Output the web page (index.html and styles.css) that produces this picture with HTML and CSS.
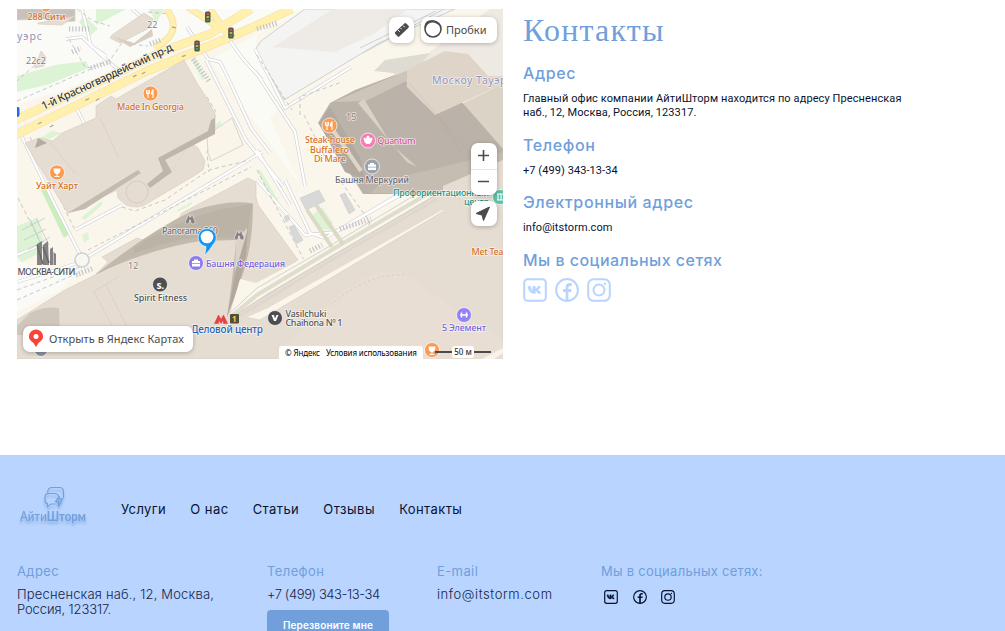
FILE: index.html
```html
<!DOCTYPE html>
<html lang="ru">
<head>
<meta charset="utf-8">
<title>АйтиШторм — Контакты</title>
<link rel="stylesheet" href="styles.css">
</head>
<body>
<svg class="sprite" width="0" height="0" aria-hidden="true">
  <symbol id="vk" viewBox="0 0 24 24"><rect x="1.2" y="1.2" width="21.6" height="21.6" rx="3.5" fill="none" stroke="currentColor" stroke-width="2"/><path d="M5 8.3h2.5c.2 2.3 1.400 4 2.300 4.300V8.300h2.500v2.700c1.300-.2 2.200-1.500 2.600-2.700h2.500c-.4 1.500-1.300 2.700-2.400 3.500 1.300.7 2.300 2 2.800 3.700h-2.700c-.5-1.300-1.400-2.300-2.800-2.500v2.500h-1C7.500 15.500 5.200 12.600 5 8.300z" fill="currentColor" stroke="currentColor" stroke-width=".5"/></symbol>
  <symbol id="fb" viewBox="0 0 24 24"><circle cx="12" cy="12" r="10.900" fill="none" stroke="currentColor" stroke-width="2"/><path d="M12 22.500V9.500q0-3 3-3h1.800M8 12.500h8.300" fill="none" stroke="currentColor" stroke-width="2.800"/></symbol>
  <symbol id="ig" viewBox="0 0 24 24"><rect x="1.200" y="1.200" width="21.600" height="21.600" rx="5.500" fill="none" stroke="currentColor" stroke-width="2"/><circle cx="12" cy="12" r="5.500" fill="none" stroke="currentColor" stroke-width="2"/><circle cx="18" cy="5.800" r="1.200" fill="currentColor"/></symbol>
</svg>

<main class="contacts">
  <div class="map">
    <svg class="map-canvas" viewBox="17 9 486 350" width="486" height="350">
      <rect x="17" y="9" width="486" height="350" fill="#fbf6eb"/>
      <path d="M17 9H285L250 27 17 105z" fill="#fafbf6"/>
      <path d="M305 9H260L255 50 284 102 270 118 300 185 210 60z" fill="#fafbf4"/>
      <path d="M17 262 75 275 60 290 17 312z" fill="#fafbf6"/>
      <!-- lawns -->
      <g fill="#dcf4d5">
        <path d="M17 76 55 65 86 61 89 68 50 84 17 92z"/><path d="M96 9H126L96 25z"/><path d="M149 9H164L156 23z"/><path d="M79 22 84 15 98 29 90 36z"/>
        <path d="M33 142 52 131 62 133 36 145z"/><path d="M214 125 221 121 222 132 217 135z"/><path d="M17 226 38 218 46 250 22 262 17 257z"/><path d="M41 190 45 188 69 234 64 238z" fill="#c9efbd"/>
        <path d="M312 215 322 207 333 223 329 230 320 229z"/><path d="M257 171 260 169 278 200 274 203z"/><path d="M81 218 101 201 103 204 85 220z"/><path d="M82 235 88 232 89 239 84 243z"/><path d="M192 61 196 59 205 78 202 80z"/><path d="M177 210 192 202 192 204 178 212z"/>
      </g>
      <!-- open square -->
      <path d="M305 9H455L379 43 284 100 255 50 261 41z" fill="#f4f4f3" stroke="#d0d0d0"/>
      <path d="M273 47 333 9H408L375 33 335 52z" fill="#eeeae6"/>
      <path d="M503 9V90L408 70 445 40 490 9z" fill="#eeeae3"/>
      <path d="M360 48 436 11M363 53 444 9" stroke="#d0d0d0" fill="none"/>
      <!-- footpaths -->
      <g fill="none" stroke="#cfcfd2" stroke-width="3.400"><path d="M82 9 91 46 106 56M66 39 82 37 101 55 122 73M187 27 208 59 220 62 230 82 251 128 270 153M206 60 246 140 283 186M228 38 243 59 262 80M132 9 147 22M255 71 295 132 305 186M76 107 85 125M103 102 108 112M257 150 290 205M255 49 285 108 351 67M17 255 45 243M22 137 55 205 82 258M75 230 122 205M84 259 262 152M17 282 78 263M257 180 305 235 335 232 415 185M285 180 310 233 325 238 437 174M80 255 84 272"/></g>
      <g fill="none" stroke="#fff" stroke-width="2.200"><path d="M82 9 91 46 106 56M66 39 82 37 101 55 122 73M187 27 208 59 220 62 230 82 251 128 270 153M206 60 246 140 283 186M228 38 243 59 262 80M132 9 147 22M255 71 295 132 305 186M76 107 85 125M103 102 108 112M257 150 290 205M255 49 285 108 351 67M17 255 45 243M22 137 55 205 82 258M75 230 122 205M84 259 262 152M17 282 78 263M257 180 305 235 335 232 415 185M285 180 310 233 325 238 437 174M80 255 84 272"/></g>
      <g fill="none" stroke="#bbbbbf" stroke-width=".8" stroke-dasharray="4 3"><path d="M69 39 85 67 92 68M93 67 110 60 122 43 148 46M45 56 17 81M17 101 91 69M77 9 93 21 110 26M148 12 170 14 174 25 165 40M198 50 253 25M207 97 216 112 207 153 209 172M257 55 292 110M300 115 300 97 342 82M304 115 325 157M18 198 52 265M257 170 304 260M337 176 370 222 365 235M122 207 135 211 165 200 209 170 250 160M88 250 251 167M30 137 74 228M17 290 80 267M17 300 78 273"/></g>
      <g stroke="#c0c0c4" stroke-width=".7" fill="none"><path d="M30 219 40 242M36 218 49 245M22 230 45 218M24 240 46 229M28 250 50 237"/></g>
      <path d="M208 153 207 135 232 118 243 145 211 161z" fill="#fbf5e9" stroke="#ccc" stroke-width=".8"/>
      <!-- avenue -->
      <g fill="none" stroke="#f8e3b0" stroke-width="9" stroke-linejoin="round"><path d="M15 120 98 82 166 50 210 34 251 9M15 135 98 95 147 71 197 51 251 28 292 9"/><path d="M166 9Q178 23 170 36 165 42 154 48M188 7 221 29M210 9 228 35" stroke-width="7"/></g>
      <g fill="none" stroke="#fff0ad" stroke-width="7.500" stroke-linejoin="round"><path d="M15 120 98 82 166 50 210 34 251 9M15 135 98 95 147 71 197 51 251 28 292 9"/><path d="M166 9Q178 23 170 36 165 42 154 48M188 7 221 29M210 9 228 35" stroke-width="5"/></g>
      <g fill="none" stroke="#aaa898" stroke-width="1.300" stroke-dasharray="4 49"><path d="M38 124 98 94 147 70 197 51 251 28M50 127 147 71M172 27 224 38"/></g>
      <!-- crossings -->
      <g fill="none" stroke="#c3c3c8" stroke-width="5" stroke-dasharray="1.200 2"><path d="M69 29H89M72 52 81 48M91 68 112 61M150 44 161 40M76 275 94 268M310 251 322 245M340 229 371 219M257 29 278 23M193 59 209 81"/></g>
      <!-- buildings -->
      <g fill="#e5dcd2" stroke="#d8cec3" stroke-width=".7">
        <path d="M17 9H75V21L50 23 46 19 17 20z" fill="#c9c1ba"/><path d="M38 23 75 16 62 25 38 24z"/>
        <path d="M34 62 38 59 41 51 46 57 44 66 35 68z"/><path d="M112 35 144 13 153 19 151 27 120 43 110 38z"/>
        <path d="M25 143 39 138 53 141 62 133 96 118V106L111 96 116 99 184 60 197 83 206 97 215 114V131L163 158 171 172 190 142 198 148 205 161 203 170 192 177 148 203Q138 210 126 205L118 198 117 190 68 213z"/>
        <path d="M17 320 65 290 95 275 108 262 102 257 137 238 143 240 178 220 182 213 248 178 256 182V197L258 205 298 260 262 283 228 314 260 320 503 176V359H17z"/>
      </g>
      <path d="M171 172 163 158 215 131 190 142 171 172z" fill="#e5dcd2"/>
      <path d="M215 118V134L165 160 172 172 150 188 147 184 163 171 158 158 208 131 211 120z" fill="#bfb6ab"/>
      <path d="M68 213 138 170 141 173 85 209z" fill="#c4bbb0"/>
      <path d="M112 36 134 43 152 29 153 36 130 47z" fill="#d8cec4"/>
      <path d="M38 138 47 143 35 148z" fill="#b5aba0"/>
      <path d="M50 143 75 173M100 118 119 158" stroke="#dcd2c7" fill="none"/>
      <circle cx="137" cy="192" r="11" fill="none" stroke="#d6ccc1"/><circle cx="82" cy="260" r="7" fill="#f9f7f2" stroke="#d0d0d2" stroke-width="1.600"/>
      <!-- tower roof and shadow -->
      <path d="M95 275Q148 232 192 211 228 199 253 203.500 253 250 239 285L227 317Q234 270 236 240L200 241Q145 250 95 275z" fill="#c2b9ad"/>
      <path d="M134 248Q185 212 253 204L245 240Q190 230 134 254z" fill="#b8afa3" opacity=".6"/>
      <path d="M236 240 247 228 247 243 236 268 235 275z" fill="#dcd2c6"/>
      <path d="M248 228 246 255 239 285 227 317 236 270z" fill="#b2a89b"/>
      <path d="M59 308Q44 306 30 313L17 326V335H60z" fill="#d0c7bc"/>
      <g fill="none" stroke="#dbd1c7"><path d="M93 292 118 277M94 292 118 337M106 285 137 347"/></g>
      <!-- diagonal street -->
      <path d="M230 314 240 279 256 283 298 261 330 248 443 182 450 178 503 152 268 290 235 319z" fill="#fbf6eb"/>
      <path d="M230 318 268 293 443 190 503 158V176L268 308 230 325z" fill="#e5dcd2"/>
      <path d="M230 313 257 288 318 253 405 201 440 180M233 317 257 301 330 257 423 203 443 190" stroke="#c9c9cc" stroke-width=".8" fill="none"/><path d="M233 315 257 295 335 248 443 185" stroke="#dfddcb" stroke-width="4" fill="none"/>
      <path d="M238 317 330 261 437 199" stroke="#dcd2c7" stroke-width="3" stroke-dasharray="1 1" fill="none"/>
      <!-- courtyards -->
      <g fill="#d8d8d9" stroke="#c6c6c8" stroke-width=".5"><path d="M300 198 319 190 325 201 306 210z"/><path d="M340 195 345 193 355 210 349 214z"/><path d="M289 227 294 225 303 240 296 244z"/><path d="M284 217 288 215 290 219 286 222z"/></g>
      <path d="M307 210 332 247M316 205 343 244" stroke="#dcdac5" stroke-width="4" fill="none"/>
      <!-- high-rise -->
      <path d="M318 123 330 103 355 90 408 70 435 100 463 103 503 147V194L384 194 363 194z" fill="#bbb2a9"/>
      <path d="M374 71 385 60 430 53 407 82 393 73z" fill="#dedbd2"/><path d="M334 102 359 91 408 70V80L366 101z" fill="#cec5ba"/>
      <path d="M407 70 445 51 468 54 488 76 503 76V84L435 115 407 87z" fill="#ded5c8"/>
      <path d="M463 103 503 84V149z" fill="#dcd3c7"/><path d="M358 103 364 99 391 144 417 167 407 162z" fill="#dbd2c6"/>
      <path d="M319 123 330 107 360 158 365 180 345 172z" fill="#b2a9a0"/><path d="M326 120 361 171" stroke="#ded5c9" stroke-width="4"/>
      <path d="M384 181 503 152V194L370 193z" fill="#c5bcb2"/><path d="M443 186 503 160V215H443z" fill="#e5dcd2"/>
      <g fill="none" stroke="#ad9f94" stroke-width=".5" opacity=".5"><path d="M436 116 490 175M425 104 480 175M409 83 450 130"/></g>
      <path d="M276 359Q325 300 359 281T410 277 503 340V359z" fill="#e9e0d6" opacity=".6"/><path d="M330 305Q370 272 405 275" fill="none" stroke="#d4cac0" stroke-dasharray="2 3"/>
      <path d="M482 359 503 348V353L494 359z" fill="#f8f4eb"/>
      <!-- signals -->
      <g fill="#51565a"><rect x="205" y="11.500" width="5.500" height="11" rx="1.500"/><rect x="228.200" y="27.500" width="5.500" height="11" rx="1.500"/><rect x="194.300" y="40.500" width="5.500" height="11" rx="1.500"/></g><path d="M207.700 13v2M231 29v2M197 42v2" stroke="#d34c44" stroke-width="2.500"/><path d="M207.700 16v2M231 32v2M197 45v2" stroke="#c9af32" stroke-width="2.500"/><path d="M207.700 19v2M231 35v2M197 48v2" stroke="#3a9b4c" stroke-width="2.500"/>
      <path d="M17 107h1q1.500 0 1.500 2v6q0 2-2.500 2z" fill="#226be8"/>
      <!-- place badges -->
      <g stroke="#fff" stroke-opacity=".7">
        <circle cx="150.500" cy="93.500" r="7.500" fill="#fb9b52"/><circle cx="57" cy="172.500" r="7.500" fill="#fb9b52"/><circle cx="329.500" cy="125.500" r="7.500" fill="#fb9b52"/><circle cx="432" cy="350" r="7.500" fill="#fb9b52"/>
        <circle cx="368" cy="140.500" r="7.500" fill="#f47eb4"/><circle cx="372" cy="166.500" r="7.500" fill="#9aa2ac"/><circle cx="196" cy="263" r="7.500" fill="#917cee"/><circle cx="464" cy="315" r="7.500" fill="#9583f6"/>
        <circle cx="160" cy="284.500" r="7.500" fill="#4e4e50"/><circle cx="275" cy="318" r="7.500" fill="#4e4e50"/><circle cx="500" cy="197" r="7.500" fill="#59c1a6"/><circle cx="41" cy="350" r="6.500" fill="#8c939d"/><circle cx="46" cy="7" r="5" fill="#fb9b52"/>
      </g>
      <g fill="none" stroke="#fff" stroke-width="1.100"><path id="fork" d="M146.500 90v2.500q0 1.500 1.500 1.500t1.500-1.500V90M148 90v8M153 98v-8q-1.500 1-1.500 4H153"/><use href="#fork" x="179" y="32"/><path d="M497 194h6M497 200h6M498 194v6M501 194v6"/><path d="M460 315h8M461.500 312.500v5M466.500 312.500v5" stroke-width="1.500"/></g>
      <g fill="#fff"><path id="glass" d="M53.500 168.500h7q0 5-3 5.500v2h2v1h-5v-1h2v-2q-3-.5-3-5.500z"/><use href="#glass" x="375" y="178"/><path d="M363.500 138q2-1 2.500 1 0-3 2-3.500 2 .5 2 3.500.5-2 2.500-1-.5 6-4.500 6t-4.500-6z"/><path id="bag" d="M368 164.500h2v-1.500h4v1.500h2v2.200h-8zm0 3h8v2.500h-8z"/><use href="#bag" x="-176" y="96.500"/><path d="M271.500 315h2.500l1 3.500 1.500-3.500h2l-2.500 6h-2z"/></g>
      <text x="156.500" y="288.500" font-size="9" font-weight="800" fill="#fff">S.</text>
      <g fill="#86827f" stroke="#fff" stroke-width=".5"><path id="bino" d="M185.500 221 187.500 217v-2h2v2h1.500v-2h2v2l2 4q.5 3-2 3t-2.500-3v-1h-1v1q-.2 3-2.300 3t-1.700-3z"/><use href="#bino" x="49" y="16"/></g>
      <path d="M37 244 42 241V265H37zM43 245 48 241 49 265H43zM50 249 53 247V265H50zM53.500 252 56 254V265H53.500z" fill="#858283"/>
      <path d="M37 245 43 264M43 247 49 263" stroke="#67666a" stroke-width="1.500" fill="none"/>
      <path d="M214.500 323.500 218.500 315 221 319.500 223.500 315 227.500 323.500H223.500L223 320 221 323.500 219 320 218.500 323.500z" fill="#e83f43" stroke="#e83f43" stroke-width=".6"/>
      <rect x="230" y="314" width="9" height="9.500" rx="1" fill="#554c3d"/><text x="232" y="322" font-size="8" font-weight="700" fill="#ffd52e">1</text>
      <!-- labels -->
      <g class="label">
        <g class="orange"><text x="27.500" y="20" textLength="38">288 Сити</text><text x="117" y="109.500" textLength="67">Made In Georgia</text><text x="36" y="188.500" textLength="42">Уайт Харт</text><text x="305" y="143" textLength="50">Steak-house</text><text x="310" y="152.500" textLength="39">Buffalero</text><text x="314" y="162" textLength="32">Di Mare</text><text x="471.500" y="255" textLength="32">Met Tea</text></g>
        <text class="pink" x="377.500" y="144" textLength="38">Quantum</text>
        <g class="gray"><text x="335" y="183" textLength="74">Башня Меркурий</text><text x="162" y="234" textLength="56">Panorama 360</text></g>
        <g class="dark"><text x="134" y="301" textLength="53">Spirit Fitness</text><text x="285.500" y="317" textLength="41">Vasilchuki</text><text x="285.500" y="326" textLength="57">Chaihona Nº 1</text><text x="17.500" y="275" textLength="58">МОСКВА-СИТИ</text></g>
        <g class="green"><text x="393" y="195.500" textLength="96">Профориентационный</text><text x="464" y="205" textLength="25">центр</text></g>
        <g class="violet"><text x="206" y="267" textLength="79">Башня Федерация</text><text x="442" y="331" textLength="44">5 Элемент</text></g>
        <text class="metro" x="191" y="333" textLength="72">Деловой центр</text>
        <g class="district"><text x="432" y="84" textLength="80">Москоу Тауэрс</text><text x="17" y="40" textLength="25">уэрс</text></g>
        <g class="number"><text x="147" y="28">22</text><text x="26" y="64">22с2</text><text x="346" y="120">15</text><text x="128" y="269">12</text></g>
        <text class="street" transform="translate(43.500 110) rotate(-24.800)" textLength="143">1-й Красногвардейский пр-д</text>
      </g>
      <!-- marker -->
      <path d="M204.500 255.500Q206 249 206 246.500A9 9 0 1 1 213.500 244Q210 250 204.500 255.500z" fill="#1894ee" stroke="#fff" stroke-width=".6"/><circle cx="207" cy="237" r="6.300" fill="#fff"/>
    </svg>
    <button class="ctl ruler" aria-label="Линейка"><svg width="18" height="18" viewBox="0 0 18 18"><path d="m2.300 11 9-8.500q1-1 2 0l2.200 2.200q1 1 0 2l-9 8.500q-1 1-2 0l-2.200-2.200q-1-1 0-2z" fill="#4b4b4b"/><path d="m5 9 1.800 1.800M7.500 7l1.200 1.200M10 4.500l1.800 1.800" stroke="#fff"/></svg></button>
    <button class="ctl traffic"><svg width="20" height="20" viewBox="0 0 20 20"><circle cx="10" cy="10" r="8" fill="none" stroke="#4b4b4b" stroke-width="1.600"/><path d="M1.500 9Q1 3 6 1.500 15 0 18 8 13 3 9 3.500 4 4 1.500 9z" fill="#4b4b4b"/></svg><span>Пробки</span></button>
    <div class="ctl zoom"><svg width="26" height="52" viewBox="0 0 26 52"><path d="M7 12.500h11M12.500 7v11M7 38.500h11" stroke="#4b4b4b" stroke-width="1.600"/><path d="M0 26.500h26" stroke="#e4e4e4"/></svg></div>
    <button class="ctl locate" aria-label="Где я"><svg width="26" height="26" viewBox="0 0 26 26"><path d="M18.500 6 12.500 19.500 11 14 5 12.500z" fill="#4b4b4b" stroke="#4b4b4b"/></svg></button>
    <button class="ctl open"><svg width="16" height="18" viewBox="0 0 16 18"><path d="M8 .5a7 7 0 0 0-7 7c0 3.300 2.400 4.800 4.500 6.500L8 18l2.500-4C12.600 12.300 15 10.800 15 7.500a7 7 0 0 0-7-7z" fill="#fc4136"/><circle cx="8" cy="7.500" r="2.500" fill="#fff"/></svg><span>Открыть в Яндекс Картах</span></button>
    <div class="terms"><span>© Яндекс</span><span>Условия использования</span></div>
    <div class="scale"><i class="bar"></i><b class="scale-text">50 м</b><i class="bar"></i></div>
  </div>

  <section class="info">
    <h1 class="title">Контакты</h1>
    <h2 class="sub s1">Адрес</h2>
    <p class="text t1">Главный офис компании АйтиШторм находится по адресу Пресненская<br>наб., 12, Москва, Россия, 123317.</p>
    <h2 class="sub s2">Телефон</h2>
    <p class="text">+7 (499) 343-13-34</p>
    <h2 class="sub s3">Электронный адрес</h2>
    <p class="text">info@itstorm.com</p>
    <h2 class="sub s4">Мы в социальных сетях</h2>
    <div class="social"><svg><use href="#vk"/></svg><svg><use href="#fb"/></svg><svg><use href="#ig"/></svg></div>
  </section>
</main>

<footer class="footer">
  <div class="footer-top">
    <svg class="logo" width="74" height="46" viewBox="0 0 74 46"><g fill="none" stroke="#709fdc" stroke-width="1.100"><path d="M30.500 7.500Q31 2.500 35 2.500H42.500Q46.500 2.500 46.500 6.500V13"/><path d="M42 12Q41 8.500 37.500 8.500H31.500Q28 8.500 28 12V15.500Q28 18.500 30.500 18.500V21.500L34 19H38"/><path d="M42.500 11 42 13.500 45.500 14 41.500 21V17L38.500 16.500z" fill="#8db4ea"/></g><text class="logo-text" x="3" y="35.500" textLength="66" lengthAdjust="spacingAndGlyphs">Айти<tspan font-weight="700">Шторм</tspan></text></svg>
    <nav class="nav"><a class="n1">Услуги</a><a class="n2">О нас</a><a class="n3">Статьи</a><a class="n4">Отзывы</a><a class="n5">Контакты</a></nav>
  </div>
  <div class="columns">
    <div class="col c1"><h3 class="col-title">Адрес</h3><p class="col-text v1">Пресненская наб., 12, Москва,<br><span class="v1b">Россия, 123317.</span></p></div>
    <div class="col c2"><h3 class="col-title">Телефон</h3><p class="col-text v2">+7 (499) 343-13-34</p><button class="call">Перезвоните мне</button></div>
    <div class="col c3"><h3 class="col-title">E-mail</h3><p class="col-text v3">info@itstorm.com</p></div>
    <div class="col c4"><h3 class="col-title">Мы в социальных сетях:</h3><div class="social-small"><svg><use href="#vk"/></svg><svg><use href="#fb"/></svg><svg><use href="#ig"/></svg></div></div>
  </div>
</footer>
</body>
</html>
```
FILE: styles.css
```css
* { box-sizing: border-box; }
html, body { margin: 0; height: 631px; overflow: hidden; }
body { background: #fff; color: #071330; font-family: Inter, "Noto Sans", sans-serif; }
h1, h2, h3, p { margin: 0; font-weight: 400; white-space: nowrap; }
button { border: 0; padding: 0; font: inherit; }
.sprite { position: absolute; }
.contacts { display: flex; gap: 20px; height: 455px; padding: 9px 17px; }
.map { position: relative; flex: none; width: 486px; height: 350px; overflow: hidden; font-family: "Noto Sans", sans-serif; }
.map-canvas { display: block; }
.label text { font-size: 9px; font-weight: 500; stroke: #fff; stroke-opacity: .65; stroke-width: 1.6px; paint-order: stroke; stroke-linejoin: round; }
.orange { fill: #d8701e; }
.pink { fill: #d9569a; }
.gray { fill: #6d7077; }
.dark { fill: #505156; }
.green { fill: #249580; }
.violet { fill: #7963dc; }
.metro { fill: #2f62b4; }
.label .metro { font-size: 10px; }
.district { fill: #9392bd; }
.label .district text { font-size: 10.5px; font-weight: 400; }
.number { fill: #85817e; }
.label .number text { font-weight: 400; }
.label .street { font-size: 11px; fill: #393b3e; }
.ctl { position: absolute; display: flex; align-items: center; background: #fff; border-radius: 7px; box-shadow: 0 1px 4px rgba(0,0,0,.25); color: #4b4b4b; font-size: 11px; white-space: nowrap; }
.ruler { left: 372px; top: 8px; width: 25px; height: 26px; justify-content: center; }
.traffic { left: 404px; top: 8px; width: 76px; height: 26px; padding: 0 0 2px 2px; gap: 3px; }
.zoom { left: 454px; top: 134px; width: 26px; height: 52px; }
.locate { left: 454px; top: 192px; width: 26px; height: 25px; }
.open { left: 6px; top: 317px; width: 170px; height: 26px; padding: 0 0 2px 5px; gap: 5px; letter-spacing: .04px; }
.terms { position: absolute; left: 262px; top: 337px; width: 144px; height: 13px; padding-left: 6px; display: flex; gap: 6px; background: #fff; border-radius: 3px 3px 0 0; color: #000; font-size: 8px; line-height: 13px; letter-spacing: -.14px; white-space: nowrap; }
.scale { position: absolute; left: 418px; top: 337px; width: 56px; height: 12px; display: flex; align-items: center; }
.bar { flex: 1; height: 2px; background: #4b4b4b; }
.scale-text { width: 22px; background: #fff; border-radius: 3px; color: #333; font-size: 8px; line-height: 12px; text-align: center; font-weight: 500; }
.title { height: 42px; color: #709fdc; font: 400 32px/42px "Liberation Serif", serif; letter-spacing: 1.2px; }
.sub { color: #709fdc; font-size: 16px; line-height: 20px; font-weight: 450; letter-spacing: .62px; }
.text { margin-top: 9px; font: 400 11px/14px Roboto, sans-serif; letter-spacing: .07px; }
.t1 { letter-spacing: .1px; }
.s1 { margin-top: 12px; }
.s2 { margin-top: 15px; }
.s3 { margin-top: 14px; }
.s4 { margin-top: 15px; letter-spacing: .47px; }
.social { display: flex; gap: 8px; margin-top: 8px; color: #b8d4ff; }
.social svg { width: 24px; height: 24px; }
.footer { height: 176px; padding: 27px 17px 0; background: #b8d4ff; }
.footer-top { display: flex; height: 46px; }
.logo { margin-top: 3px; flex: none; filter: drop-shadow(0 3px 1px rgba(60,100,160,.3)); }
.logo-text { fill: #709fdc; font: 500 13.5px Lato, sans-serif; }
.nav { display: flex; gap: 24px; margin: 18px 0 0 30px; font-size: 13px; line-height: 18px; }
.n1, .n3, .n5 { letter-spacing: .4px; }
.n2 { letter-spacing: .5px; }
.n4 { letter-spacing: .55px; }
.columns { display: flex; margin-top: 34px; }
.col { flex: none; }
.c1 { width: 250px; }
.c2 { width: 170px; }
.c3 { width: 164px; }
.col-title { color: #709fdc; font-size: 13px; line-height: 18px; letter-spacing: .4px; }
.c4 .col-title { letter-spacing: .27px; }
.col-text { margin-top: 7px; color: #172449; font-size: 13px; line-height: 15px; font-weight: 350; }
.v1 { letter-spacing: .17px; }
.v1b { letter-spacing: -.1px; }
.v2 { letter-spacing: -.42px; }
.v3 { letter-spacing: .58px; }
.call { display: block; width: 122px; height: 30px; margin-top: 8px; border-radius: 4px; background: #709fdc; color: #fff; font-size: 10px; font-weight: 600; letter-spacing: .15px; }
.social-small { display: flex; gap: 14.500px; margin: 9.500px 0 0 3px; }
.social-small svg { width: 14px; height: 14px; }
```
